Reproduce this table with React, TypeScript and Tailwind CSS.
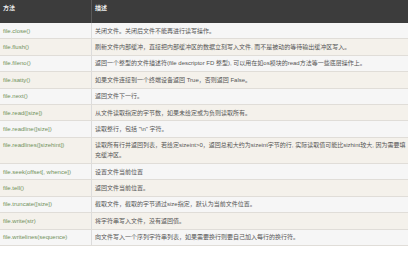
const rows: [string, string][] = [
  ["file.close()", "关闭文件。关闭后文件不能再进行读写操作。"],
  ["file.flush()", "刷新文件内部缓冲，直接把内部缓冲区的数据立刻写入文件, 而不是被动的等待输出缓冲区写入。"],
  ["file.fileno()", "返回一个整型的文件描述符(file descriptor FD 整型), 可以用在如os模块的read方法等一些底层操作上。"],
  ["file.isatty()", "如果文件连接到一个终端设备返回 True，否则返回 False。"],
  ["file.next()", "返回文件下一行。"],
  ["file.read([size])", "从文件读取指定的字节数，如果未给定或为负则读取所有。"],
  ["file.readline([size])", "读取整行，包括 \"\\n\" 字符。"],
  ["file.readlines([sizehint])", "读取所有行并返回列表，若给定sizeint>0，返回总和大约为sizeint字节的行, 实际读取值可能比sizhint较大, 因为需要填|充缓冲区。"],
  ["file.seek(offset[, whence])", "设置文件当前位置"],
  ["file.tell()", "返回文件当前位置。"],
  ["file.truncate([size])", "截取文件，截取的字节通过size指定，默认为当前文件位置。"],
  ["file.write(str)", "将字符串写入文件，没有返回值。"],
  ["file.writelines(sequence)", "向文件写入一个序列字符串列表，如果需要换行则要自己加入每行的换行符。"],
];

export default function App() {
  return (
    <div className="w-[411px] h-[257px] bg-white font-['Liberation_Sans','Noto_Sans_CJK_SC',sans-serif] text-[6px] leading-[10px]">
      <div className="w-[408px]">
        <div className="grid grid-cols-[92px_316px] h-[23px] bg-[#3c3c3c] font-bold text-[#ececec]">
          <div className="px-[3px] pt-[3px] border-r border-[#5a5a5a]">方法</div>
          <div className="px-[3px] pt-[3px]">描述</div>
        </div>
        {rows.map(([name, desc], i) => {
          const parts = desc.split("|");
          return (
            <div
              key={name}
              className={
                "grid grid-cols-[92px_316px] border-b border-[#e0ddd8] " +
                (i % 2 === 0 ? "bg-[#f6f6f6]" : "bg-[#f4f1eb]")
              }
            >
              <div className="px-[3px] py-[2.7px] border-r border-[#dcdcdc] text-[#71925c] whitespace-nowrap overflow-hidden">
                {name}
              </div>
              <div className="px-[3px] py-[2.7px] text-[#555] whitespace-nowrap overflow-hidden">
                {parts[0]}
                {parts[1] && (
                  <>
                    <br />
                    {parts[1]}
                  </>
                )}
              </div>
            </div>
          );
        })}
      </div>
    </div>
  );
}
